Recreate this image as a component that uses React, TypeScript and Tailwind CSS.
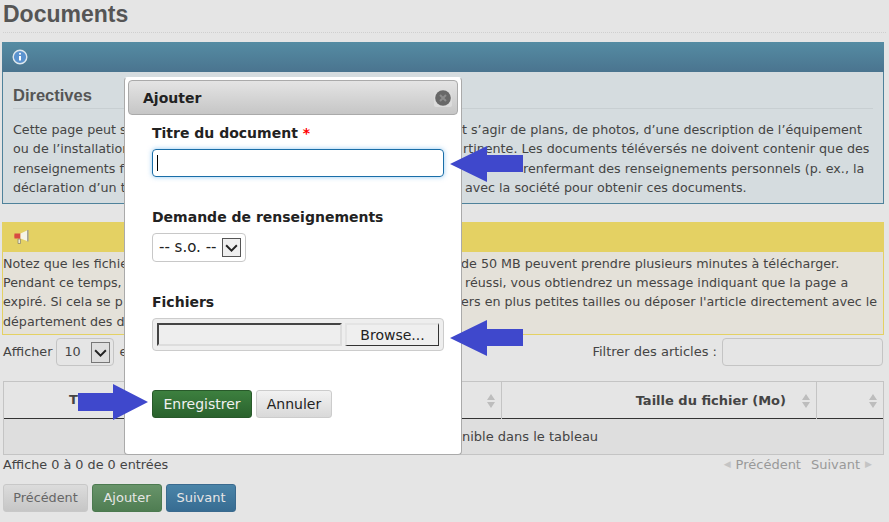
const body = { fontFamily: '"DejaVu Sans", Verdana, sans-serif' }
const arial = { fontFamily: '"Liberation Sans", Arial, sans-serif' }

function SortIcon() {
  return (
    <svg width="8" height="14" viewBox="0 0 8 14" className="absolute right-[6px] top-[12px]">
      <path d="M4 0L8 6H0Z M4 14L0 8H8Z" fill="#bdbdbd" />
    </svg>
  )
}

function Chevron() {
  return (
    <svg width="19" height="21" viewBox="0 0 19 21">
      <path d="M3.5 8L9.5 14L15.5 8" fill="none" stroke="#222" strokeWidth="2.2" />
    </svg>
  )
}

function ArrowLeft({ top }: { top: string }) {
  return (
    <svg width="73" height="36" viewBox="0 0 73 36" className={`absolute left-[450px] ${top}`}>
      <path d="M0 18L37 0V9H73V26H37V36Z" fill="#3f48cc" />
    </svg>
  )
}

function InfoIcon() {
  return (
    <svg width="16" height="16" viewBox="0 0 16 16">
      <circle cx="8" cy="8" r="6.8" fill="#5b93cf" stroke="#dfe8ee" strokeWidth="1.4" />
      <circle cx="8" cy="4.8" r="1" fill="#fff" />
      <path d="M7 7H9V11.4H7Z" fill="#fff" />
    </svg>
  )
}

function MegaphoneIcon() {
  return (
    <svg width="16" height="16" viewBox="0 0 16 16">
      <path d="M4 10H6.5V14.5H4Z" fill="#eee9cf" stroke="#8f8a6c" strokeWidth="0.8" />
      <path d="M0.5 4.5Q0 7 0.5 9.5H6.5V4.5Z" fill="#d84b42" />
      <path d="M6.5 4.5L13 1.5V12L6.5 9.5Z" fill="#f6f4e8" />
      <path d="M13.8 1V12.5" stroke="#a5a598" strokeWidth="1.6" />
    </svg>
  )
}

function TextLine({ left, right, width }: { left: string; right: string; width: string }) {
  return (
    <div className="flex h-[19.4px] whitespace-nowrap">
      <span className={`${width} shrink-0 overflow-hidden`}>{left}</span>
      <span>{right}</span>
    </div>
  )
}

function App() {
  return (
    <div className="relative h-[522px] w-[889px] overflow-hidden bg-[#e5e5e5] text-[13px] text-[#444]" style={body}>
      <div className="px-[3px]">
        <h1 className="h-[33px] border-b border-dotted border-[#cfcfcf] text-[23px] leading-[28px] font-bold text-[#555]" style={arial}>Documents</h1>
      </div>

      <section className="mt-[9px] ml-[2px] w-[882px] h-[162px] border border-[#4f829b] border-t-0 bg-[#d5dcdf]">
        <div className="-mx-px flex h-[30px] items-center bg-gradient-to-b from-[#558ca3] to-[#4a748f] pl-[10px]">
          <InfoIcon />
        </div>
        <div className="px-[10px]">
          <h2 className="h-[37px] border-b border-[#c8cfd2] pt-[13px] text-[16.5px] leading-[20px] font-bold text-[#555]" style={arial}>Directives</h2>
          <div className="mt-[11px] text-[12.7px] leading-[19.4px] text-[#444]">
            <TextLine width="w-[449px]" left="Cette page peut s" right="t s’agir de plans, de photos, d’une description de l’équipement" />
            <TextLine width="w-[450px]" left="ou de l’installation" right="rtinente. Les documents téléversés ne doivent contenir que des" />
            <TextLine width="w-[510px]" left="renseignements f" right="renfermant des renseignements personnels (p. ex., la" />
            <TextLine width="w-[452px]" left="déclaration d’un t" right="avec la société pour obtenir ces documents." />
          </div>
        </div>
      </section>

      <section className="mt-[18px] ml-[2px] w-[882px] h-[113px] border border-t-0 border-[#e4d163] bg-[#e4e1d9]">
        <div className="-mx-px flex h-[30px] items-center bg-[#e4d163] pl-[12px]">
          <MegaphoneIcon />
        </div>
        <div className="mt-[1.5px] text-[12.7px] leading-[19.4px]">
          <TextLine width="w-[458px]" left="Notez que les fichie" right="de 50 MB peuvent prendre plusieurs minutes à télécharger." />
          <TextLine width="w-[462px]" left="Pendant ce temps," right="réussi, vous obtiendrez un message indiquant que la page a" />
          <TextLine width="w-[458px]" left="expiré. Si cela se p" right="ers en plus petites tailles ou déposer l'article directement avec le" />
          <TextLine width="w-[458px]" left="département des d" right="" />
        </div>
      </section>

      <div className="mt-[3px] flex h-[28px] items-center justify-between pr-[6px] pl-[3px] text-[12.8px]">
        <div className="flex items-center">
          <span>Afficher</span>
          <div className="ml-[4px] flex h-[28px] w-[58px] items-center justify-between rounded-[4px] border border-[#c4c4c4] pr-[3px] pl-[7px]">
            <span>10</span>
            <span className="flex h-[21px] w-[19px] items-center justify-center border border-[#777] bg-[#dedede]"><Chevron /></span>
          </div>
          <span className="ml-[5px]">e</span>
        </div>
        <div className="flex items-center text-[13px]">
          <span>Filtrer des articles :</span>
          <div className="ml-[5px] h-[28px] w-[161px] rounded-[4px] border border-[#c4c4c4]" />
        </div>
      </div>

      <table className="mt-[15px] ml-[3px] w-[880px] table-fixed border-collapse">
        <colgroup>
          <col className="w-[270px]" />
          <col className="w-[228px]" />
          <col className="w-[315px]" />
          <col className="w-[67px]" />
        </colgroup>
        <thead>
          <tr className="h-[37px] border-b border-b-[#333]">
            <th className="relative border border-b-0 border-[#c4c4c4] pl-[65px] text-left font-bold">T</th>
            <th className="relative border border-b-0 border-[#c4c4c4]"><SortIcon /></th>
            <th className="relative border border-b-0 border-[#c4c4c4] pt-px pr-[30px] text-right font-bold">Taille du fichier (Mo)<SortIcon /></th>
            <th className="relative border border-b-0 border-[#c4c4c4]"><SortIcon /></th>
          </tr>
        </thead>
        <tbody>
          <tr className="h-[36px] bg-[#dedede]">
            <td colSpan={4} className="border border-t-0 border-[#c4c4c4] pl-[458px] text-left">nible dans le tableau</td>
          </tr>
        </tbody>
      </table>

      <div className="flex h-[19px] items-center justify-between pr-[17px] pl-[3px] text-[12.8px]">
        <span>Affiche 0 à 0 de 0 entrées</span>
        <div className="flex items-center text-[13px] text-[#999]">
          <span className="mr-[5px] text-[9px] text-[#c4c4c4]">◀</span>
          <span>Précédent</span>
          <span className="ml-[10px]">Suivant</span>
          <span className="ml-[5px] text-[9px] text-[#c4c4c4]">▶</span>
        </div>
      </div>

      <div className="mt-[10px] flex gap-[4px] pl-[3px]">
        <button className="h-[28px] w-[85px] rounded-[3px] border border-[#c8c8c8] bg-gradient-to-b from-[#dcdcdc] to-[#c6c6c6] text-[12.8px] text-[#666]">Précédent</button>
        <button className="h-[28px] w-[70px] rounded-[3px] border border-[#4c7a50] bg-gradient-to-b from-[#68946a] to-[#4f7d52] text-[#e6e6e6]">Ajouter</button>
        <button className="h-[28px] w-[70px] rounded-[3px] border border-[#3a6a8e] bg-gradient-to-b from-[#4a84a8] to-[#376c92] text-[#e6e6e6]">Suivant</button>
      </div>

      <div className="absolute top-[77px] left-[124px] h-[378px] w-[338px] rounded-[4px] border border-t-white border-r-[#aaa] border-b-[#aaa] border-l-[#aaa] bg-white px-[3px] pt-[2px]">
        <div className="flex h-[35px] items-center justify-between rounded-[4px] border border-[#aaa] bg-gradient-to-b from-[#e4e4e4] to-[#c6c6c6] pr-[5px] pl-[14px] text-[14px] font-bold text-[#222]">
          <span className="pt-[2px]">Ajouter</span>
          <span className="flex h-[18px] w-[18px] items-center justify-center rounded-[2px] bg-[#dcdcdc]">
            <svg width="16" height="16" viewBox="0 0 16 16">
              <circle cx="8" cy="8" r="7.8" fill="#686868" />
              <path d="M5 5L11 11M11 5L5 11" stroke="#8c8c8c" strokeWidth="2" />
            </svg>
          </span>
        </div>
        <form className="pl-[24px] text-[#222]">
          <div className="mt-[8px] h-[20px] text-[14px] leading-[20px] font-bold">Titre du document <span className="text-[#f00]">*</span></div>
          <div className="mt-[6px] flex h-[28px] w-[292px] items-center rounded-[4px] border border-[#1a6ea8] pl-[4px] shadow-[0_0_5px_rgba(82,168,236,0.6)]">
            <span className="h-[16px] w-px bg-black" />
          </div>

          <div className="mt-[30px] h-[20px] text-[14px] leading-[20px] font-bold">Demande de renseignements</div>
          <div className="mt-[6px] flex h-[29px] w-[94px] items-center justify-between rounded-[4px] border border-[#c8c8c8] pr-[4px] pl-[6px]">
            <span className="text-[15px] whitespace-nowrap">-- s.o. --</span>
            <span className="flex h-[19px] w-[19px] items-center justify-center border border-[#555] bg-[#efefef]"><Chevron /></span>
          </div>

          <div className="mt-[30px] h-[20px] text-[14px] leading-[20px] font-bold">Fichiers</div>
          <div className="mt-[6px] flex h-[33px] w-[292px] items-center gap-[3px] rounded-[4px] border border-[#ccc] bg-[#eee] pl-[4px]">
            <span className="h-[23px] w-[185px] border-t-2 border-l-2 border-t-[#444] border-l-[#444] border-r-[#ddd] border-b-[#ddd] border-r-2 border-b-2" />
            <span className="flex h-[23px] w-[94px] items-center justify-center border-r border-b border-r-[#333] border-b-[#333] border-t-2 border-l-2 border-t-[#e4e4e4] border-l-[#e4e4e4] bg-[#efefef] text-[14px]">Browse...</span>
          </div>

          <div className="mt-[39px] flex gap-[4px] text-[14px]">
            <button type="button" className="h-[28px] w-[100px] rounded-[3px] border border-[#28592a] bg-gradient-to-b from-[#3d803f] to-[#2a622d] text-[#f0f0f0]">Enregistrer</button>
            <button type="button" className="h-[28px] w-[76px] rounded-[3px] border border-[#ccc] bg-gradient-to-b from-[#f2f2f2] to-[#d9d9d9] text-[#222]">Annuler</button>
          </div>
        </form>
      </div>

      <ArrowLeft top="top-[146px]" />
      <ArrowLeft top="top-[320px]" />
      <svg width="70" height="36" viewBox="0 0 70 36" className="absolute top-[384px] left-[78px]">
        <path d="M70 18L35 0V9H0V27H35V36Z" fill="#3f48cc" />
      </svg>
    </div>
  )
}

export default App
